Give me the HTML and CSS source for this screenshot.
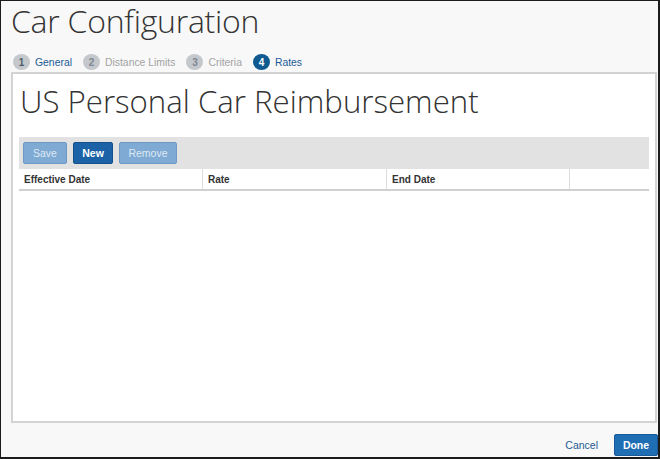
FILE: index.html
```html
<!DOCTYPE html>
<html>
<head>
<meta charset="utf-8">
<link rel="stylesheet" href="styles.css">
</head>
<body>
<div class="frame">
  <h1 class="title">Car Configuration</h1>
  <div class="steps">
    <div class="step done"><span class="num">1</span><span class="label">General</span></div>
    <div class="step off"><span class="num">2</span><span class="label">Distance Limits</span></div>
    <div class="step off"><span class="num">3</span><span class="label">Criteria</span></div>
    <div class="step current"><span class="num">4</span><span class="label">Rates</span></div>
  </div>
  <div class="panel">
    <h2 class="subtitle">US Personal Car Reimbursement</h2>
    <div class="toolbar">
      <button class="btn disabled btn-save">Save</button>
      <button class="btn primary btn-new">New</button>
      <button class="btn disabled btn-remove">Remove</button>
    </div>
    <div class="grid-head">
      <div class="col c1">Effective Date</div>
      <div class="col c2">Rate</div>
      <div class="col c3">End Date</div>
      <div class="col c4"></div>
    </div>
  </div>
  <div class="footer">
    <a class="cancel">Cancel</a>
    <button class="btn done">Done</button>
  </div>
</div>
</body>
</html>
```

FILE: styles.css
```css
* { box-sizing: border-box; }
html, body { margin: 0; padding: 0; }
body { font-family: "Liberation Sans", Arial, sans-serif; font-size: 10px; color: #333; }

.frame {
  width: 660px;
  height: 459px;
  background: #f8f8f8;
  border-style: solid;
  border-color: #1c1c1c;
  border-width: 1px 2px 2px 1px;
  display: flex;
  flex-direction: column;
}

.title {
  margin: 0 0 0 10px;
  font-family: "Open Sans", sans-serif;
  font-weight: 300;
  font-size: 32px;
  line-height: 40px;
  color: #333;
  letter-spacing: -0.25px;
}

.steps {
  display: flex;
  align-items: center;
  margin: 13px 0 2px 12px;
  height: 16px;
  gap: 11px;
}
.step { display: flex; align-items: center; gap: 5px; }
.num {
  width: 17px;
  height: 16px;
  border-radius: 50%;
  background: #c4c8cc;
  color: #4d5c6a;
  font-weight: bold;
  font-size: 10px;
  display: flex;
  align-items: center;
  justify-content: center;
}
.label { font-size: 10.4px; }
.step.done .label, .step.current .label { color: #1b5b95; }
.step.off .label { color: #a3a3a3; }
.step.off .num { color: #7d8792; }
.step.current .num { background: #0e5a91; color: #fff; }

.panel {
  margin: 0 1px 0 10px;
  height: 351px;
  background: #fff;
  border: 2px solid #d3d3d3;
  padding: 9px 6px 0 6px;
}

.subtitle {
  margin: 0;
  font-family: "Open Sans", sans-serif;
  font-weight: 300;
  font-size: 31.2px;
  line-height: 36px;
  color: #333;
  padding-left: 1px;
}

.toolbar {
  margin-top: 18px;
  background: #e2e2e2;
  height: 32px;
  padding: 5px 4px;
  display: flex;
  gap: 6px;
}

.btn {
  font-family: "Liberation Sans", Arial, sans-serif;
  font-size: 10.5px;
  height: 22px;
  border-radius: 2px;
  padding: 0;
  border: 1px solid #5b8bba;
  color: #fff;
  cursor: default;
}
.btn.disabled { background: #7eaad3; border-color: #6d99c4; color: #dfe9f3; }
.btn.primary { background: #1b63a6; border-color: #14508a; font-weight: bold; }
.btn-save { width: 44px; }
.btn-new { width: 40px; }
.btn-remove { width: 58px; }

.grid-head {
  display: flex;
  height: 22px;
  border-bottom: 2px solid #d0d0d0;
}
.col {
  font-weight: bold;
  font-size: 10px;
  color: #333;
  padding: 5px 0 0 5px;
  border-right: 1px solid #dcdcdc;
}
.c1 { width: 184px; }
.c2 { width: 184px; }
.c3 { width: 183px; }
.c4 { flex: 1; border-right: none; }

.footer {
  display: flex;
  justify-content: flex-end;
  align-items: center;
  gap: 16px;
  margin-top: 11px;
}
.cancel { color: #1b5b95; font-size: 10.5px; }
.btn.done {
  width: 44px;
  background: #1f6db3;
  border-color: #18599a;
  font-weight: bold;
  font-size: 10.5px;
}
```
